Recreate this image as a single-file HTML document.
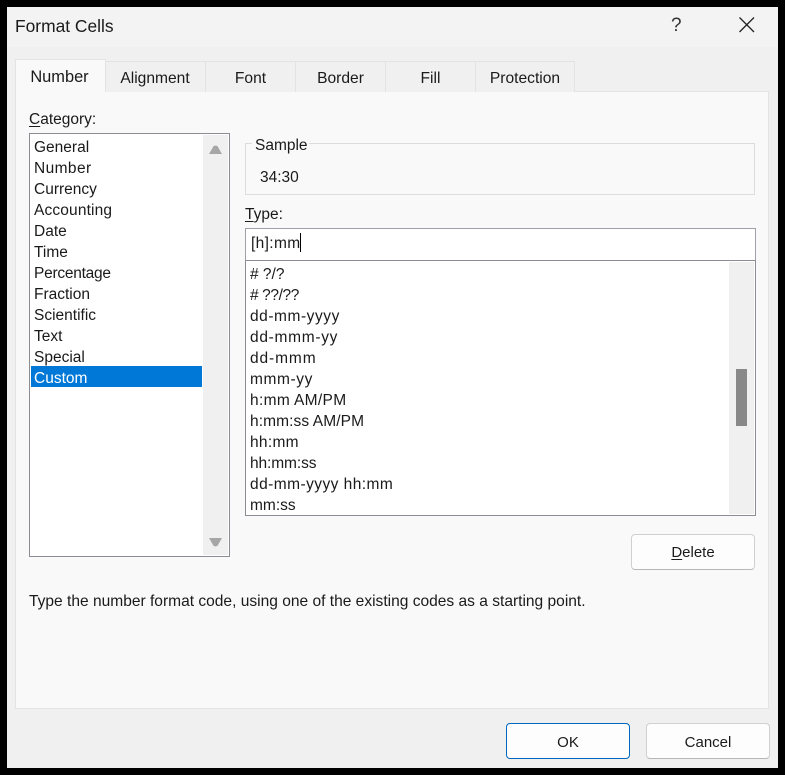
<!DOCTYPE html>
<html><head><meta charset="utf-8">
<style>
html,body{margin:0;padding:0;background:#000;}
body{width:785px;height:775px;position:relative;overflow:hidden;font-family:"Liberation Sans",sans-serif;font-size:15.5px;color:#1a1a1a;}
.a,.t{position:absolute;box-sizing:border-box;}
.t{white-space:nowrap;line-height:21px;height:21px;margin-top:1px;}
.tab{position:absolute;box-sizing:border-box;top:61px;height:31px;background:#f0f0f0;border:1px solid #e3e3e3;border-bottom:none;text-align:center;line-height:32px;font-size:15.6px;padding-top:1px;}
.btn{position:absolute;box-sizing:border-box;width:124px;height:36px;background:#fdfdfd;border:1px solid #d0d0d0;border-bottom-color:#b8b8b8;border-radius:4px;text-align:center;line-height:36px;font-size:15px;}
u{text-underline-offset:2px;}
</style></head><body>
<div class="a" style="left:7px;top:7px;width:771px;height:761px;background:#f0f0f0;"></div>
<div class="a" style="left:7px;top:7px;width:771px;height:40px;background:#f3f3f3;"></div>
<div class="t" style="left:15px;top:15px;font-size:17.4px;">Format Cells</div>
<div class="t" style="left:671px;top:14px;font-size:19px;color:#333;">?</div>
<svg class="a" style="left:738px;top:16px" width="18" height="18" viewBox="0 0 18 18"><path d="M1.5 1.5L16 16M16 1.5L1.5 16" stroke="#222" stroke-width="1.3" fill="none"/></svg>

<div class="a" style="left:15px;top:91px;width:754px;height:618px;background:#f9f9f9;border:1px solid #e3e3e3;"></div>
<div class="tab" style="left:15px;top:59px;width:91px;height:33px;background:#f9f9f9;line-height:33px;z-index:2;font-size:16.4px;padding-right:2px;">Number</div>
<div class="tab" style="left:105px;width:101px;padding-right:1px;">Alignment</div>
<div class="tab" style="left:205px;width:91px;">Font</div>
<div class="tab" style="left:295px;width:91px;">Border</div>
<div class="tab" style="left:385px;width:91px;">Fill</div>
<div class="tab" style="left:475px;width:100px;">Protection</div>

<div class="t" style="left:29px;top:108px;"><u>C</u>ategory:</div>
<div class="a" style="left:29px;top:133px;width:201px;height:424px;background:#fff;border:1px solid #8c8c94;"></div>
<div class="a" style="left:203px;top:135px;width:25px;height:420px;background:#f0f0f0;"></div>
<svg class="a" style="left:209px;top:145px" width="13" height="9"><path d="M0 9L4.5 1.2Q6.5 0 8.5 1.2L13 9Z" fill="#a6a6a6"/></svg>
<svg class="a" style="left:209px;top:538px" width="13" height="9"><path d="M0 0L13 0L8.5 7.8Q6.5 9 4.5 7.8Z" fill="#a6a6a6"/></svg>
<div class="a" style="left:31px;top:366px;width:171px;height:21px;background:#0078d7;"></div>
<div class="t" style="left:34px;top:136px;">General</div>
<div class="t" style="left:34px;top:157px;letter-spacing:.4px;">Number</div>
<div class="t" style="left:34px;top:178px;">Currency</div>
<div class="t" style="left:34px;top:199px;letter-spacing:.15px;">Accounting</div>
<div class="t" style="left:34px;top:220px;">Date</div>
<div class="t" style="left:34px;top:241px;">Time</div>
<div class="t" style="left:34px;top:262px;letter-spacing:-.25px;">Percentage</div>
<div class="t" style="left:34px;top:283px;">Fraction</div>
<div class="t" style="left:34px;top:304px;">Scientific</div>
<div class="t" style="left:34px;top:325px;">Text</div>
<div class="t" style="left:34px;top:346px;">Special</div>
<div class="t" style="left:34px;top:367px;color:#fff;">Custom</div>

<div class="a" style="left:245px;top:143px;width:510px;height:52px;border:1px solid #dcdcdc;"></div>
<div class="t" style="left:252px;top:134px;background:#f9f9f9;padding:0 1px 0 3px;">Sample</div>
<div class="t" style="left:260px;top:166px;">34:30</div>
<div class="t" style="left:245px;top:203px;"><u>T</u>ype:</div>

<div class="a" style="left:245px;top:228px;width:511px;height:33px;background:#fff;border:1px solid #a0a0a8;"></div>
<div class="t" style="left:251px;top:232px;letter-spacing:.35px;">[h]:mm</div>
<div class="a" style="left:300px;top:233px;width:1px;height:19px;background:#000;"></div>

<div class="a" style="left:245px;top:260px;width:511px;height:256px;background:#fff;border:1px solid #8c8c94;"></div>
<div class="a" style="left:729px;top:262px;width:25px;height:252px;background:#f0f0f0;"></div>
<div class="a" style="left:736px;top:369px;width:11px;height:57px;background:#888;"></div>
<div class="t" style="left:250px;top:263px;">#&nbsp;?/?</div>
<div class="t" style="left:250px;top:284px;letter-spacing:-.4px;">#&nbsp;??/??</div>
<div class="t" style="left:250px;top:305px;letter-spacing:.55px;">dd-mm-yyyy</div>
<div class="t" style="left:250px;top:326px;letter-spacing:.7px;">dd-mmm-yy</div>
<div class="t" style="left:250px;top:347px;letter-spacing:.9px;">dd-mmm</div>
<div class="t" style="left:250px;top:368px;letter-spacing:.6px;">mmm-yy</div>
<div class="t" style="left:250px;top:389px;letter-spacing:.35px;">h:mm AM/PM</div>
<div class="t" style="left:250px;top:410px;letter-spacing:.1px;">h:mm:ss AM/PM</div>
<div class="t" style="left:250px;top:431px;letter-spacing:.3px;">hh:mm</div>
<div class="t" style="left:250px;top:452px;letter-spacing:-.1px;">hh:mm:ss</div>
<div class="t" style="left:250px;top:473px;letter-spacing:.45px;">dd-mm-yyyy hh:mm</div>
<div class="t" style="left:250px;top:494px;">mm:ss</div>

<div class="btn" style="left:631px;top:534px;"><u>D</u>elete</div>
<div class="t" style="left:29px;top:590px;font-size:15.55px;">Type the number format code, using one of the existing codes as a starting point.</div>

<div class="btn" style="left:506px;top:723px;border:1px solid #0067c0;line-height:36px;padding-top:1px;">OK</div>
<div class="btn" style="left:646px;top:723px;line-height:36px;padding-top:1px;">Cancel</div>
</body></html>
